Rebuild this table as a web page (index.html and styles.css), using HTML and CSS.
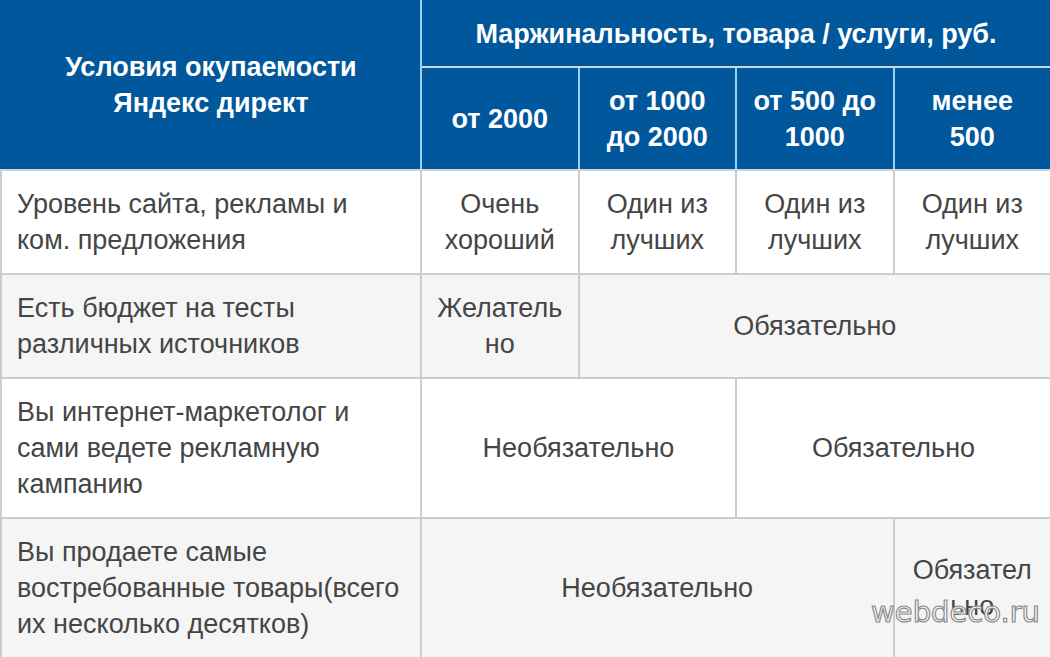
FILE: index.html
```html
<!DOCTYPE html>
<html lang="ru">
<head>
<meta charset="utf-8">
<title>Условия окупаемости Яндекс директ</title>
<link rel="stylesheet" href="styles.css">
</head>
<body>
<div class="wrap">
<table class="grid">
  <colgroup>
    <col class="c-first">
    <col class="c-val">
    <col class="c-val">
    <col class="c-val">
    <col class="c-val">
  </colgroup>
  <thead>
    <tr>
      <th rowspan="2" class="h-main">Условия окупаемости Яндекс директ</th>
      <th colspan="4" class="h-top">Маржинальность, товара / услуги, руб.</th>
    </tr>
    <tr>
      <th>от 2000</th>
      <th>от 1000 до 2000</th>
      <th>от 500 до 1000</th>
      <th>менее 500</th>
    </tr>
  </thead>
  <tbody>
    <tr>
      <td class="label">Уровень сайта, рекламы и ком. предложения</td>
      <td>Очень хороший</td>
      <td>Один из лучших</td>
      <td>Один из лучших</td>
      <td>Один из лучших</td>
    </tr>
    <tr class="alt">
      <td class="label">Есть бюджет на тесты различных источников</td>
      <td>Желательно</td>
      <td colspan="3">Обязательно</td>
    </tr>
    <tr>
      <td class="label">Вы интернет-маркетолог и сами ведете рекламную кампанию</td>
      <td colspan="2">Необязательно</td>
      <td colspan="2">Обязательно</td>
    </tr>
    <tr class="alt">
      <td class="label">Вы продаете самые востребованные товары(всего их несколько десятков)</td>
      <td colspan="3">Необязательно</td>
      <td>Обязательно</td>
    </tr>
  </tbody>
</table>
<div class="watermark">webdeco.ru</div>
</div>
</body>
</html>
```

FILE: styles.css
```css
html, body {
  margin: 0;
  padding: 0;
  background: #ffffff;
}

.wrap {
  position: relative;
  width: 1050px;
  height: 657px;
  overflow: hidden;
}

.grid {
  width: 1050px;
  border-collapse: collapse;
  table-layout: fixed;
  font-family: "Liberation Sans", Arial, sans-serif;
  font-size: 27px;
  line-height: 36px;
  color: #454545;
}

.c-first { width: 420px; }
.c-val { width: 157.5px; }

.grid th {
  background: #01579b;
  color: #ffffff;
  font-weight: bold;
  text-align: center;
  vertical-align: middle;
  padding: 15px 15px 14px;
  line-height: 36px;
  border: 2px solid #c9d6e4;
  border-top: none;
  border-left-color: #9ccff2;
  border-right-color: #9ccff2;
}

.grid th.h-main {
  border-left: 2px solid #01579b;
}

.grid th.h-top {
  padding-top: 16px;
  padding-bottom: 14px;
}

.grid td {
  padding: 15px;
  text-align: center;
  vertical-align: middle;
  border: 2px solid #cccccc;
  overflow-wrap: anywhere;
  background: #ffffff;
}

.grid td.label {
  text-align: left;
}

.grid tr.alt td {
  background: #f5f5f5;
}

.watermark {
  position: absolute;
  right: 10px;
  top: 594px;
  font-family: "DejaVu Sans", Verdana, sans-serif;
  font-size: 29px;
  letter-spacing: 0;
  color: #ffffff;
  -webkit-text-stroke: 1.2px #8a8a8a;
  line-height: 36px;
}
```
